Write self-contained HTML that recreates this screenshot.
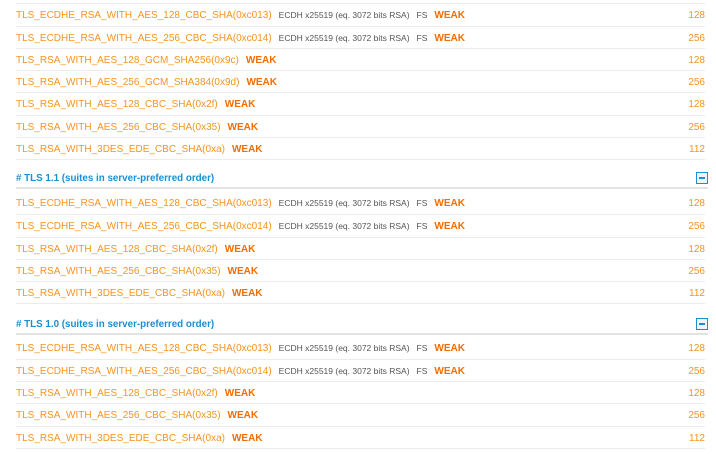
<!DOCTYPE html>
<html><head><meta charset="utf-8"><style>
body{margin:0;width:716px;height:454px;background:#fff;position:relative;overflow:hidden;font-family:"Liberation Sans",Arial,sans-serif}
.r{position:absolute;left:16px;width:689px;height:22px;border-top:1px solid #ececec;box-sizing:border-box;line-height:21px;font-size:10px;color:#f7931e;white-space:nowrap;padding-top:1px}
.r .n{position:absolute;right:0;top:1px;line-height:21px}
.s,.fs,.w{line-height:1}
.s{font-size:8.5px;color:#555;margin-left:7px}
.fs{font-size:8.5px;color:#555;margin-left:7px}
.w{font-weight:bold;color:#f56d00;margin-left:7px;font-size:10px}
.h{position:absolute;left:16px;width:692px;height:16px;border-bottom:2px solid #e3e3e3;font-size:9.8px;font-weight:bold;color:#1a8fd1;line-height:16px}
.m{position:absolute;right:0;top:1px;width:10px;height:10px;border:1px solid #1a8fd1;background:#eef6fb}
.m:after{content:"";position:absolute;left:2px;top:4px;width:6px;height:2px;background:#1a8fd1}
</style></head><body>
<div class="r" style="top:3px">TLS_ECDHE_RSA_WITH_AES_128_CBC_SHA(0xc013)<span class="s">ECDH x25519 (eq. 3072 bits RSA)</span><span class="fs">FS</span><span class="w">WEAK</span><span class="n">128</span></div>
<div class="r" style="top:25.5px">TLS_ECDHE_RSA_WITH_AES_256_CBC_SHA(0xc014)<span class="s">ECDH x25519 (eq. 3072 bits RSA)</span><span class="fs">FS</span><span class="w">WEAK</span><span class="n">256</span></div>
<div class="r" style="top:48px">TLS_RSA_WITH_AES_128_GCM_SHA256(0x9c)<span class="w">WEAK</span><span class="n">128</span></div>
<div class="r" style="top:70px">TLS_RSA_WITH_AES_256_GCM_SHA384(0x9d)<span class="w">WEAK</span><span class="n">256</span></div>
<div class="r" style="top:92px">TLS_RSA_WITH_AES_128_CBC_SHA(0x2f)<span class="w">WEAK</span><span class="n">128</span></div>
<div class="r" style="top:114.5px">TLS_RSA_WITH_AES_256_CBC_SHA(0x35)<span class="w">WEAK</span><span class="n">256</span></div>
<div class="r" style="top:137px;border-bottom:1px solid #ececec;height:23px">TLS_RSA_WITH_3DES_EDE_CBC_SHA(0xa)<span class="w">WEAK</span><span class="n">112</span></div>

<div class="h" style="top:171px"># TLS 1.1 (suites in server-preferred order)<span class="m"></span></div>
<div class="r" style="top:192px;border-top:none">TLS_ECDHE_RSA_WITH_AES_128_CBC_SHA(0xc013)<span class="s">ECDH x25519 (eq. 3072 bits RSA)</span><span class="fs">FS</span><span class="w">WEAK</span><span class="n">128</span></div>
<div class="r" style="top:214px">TLS_ECDHE_RSA_WITH_AES_256_CBC_SHA(0xc014)<span class="s">ECDH x25519 (eq. 3072 bits RSA)</span><span class="fs">FS</span><span class="w">WEAK</span><span class="n">256</span></div>
<div class="r" style="top:237px">TLS_RSA_WITH_AES_128_CBC_SHA(0x2f)<span class="w">WEAK</span><span class="n">128</span></div>
<div class="r" style="top:259px">TLS_RSA_WITH_AES_256_CBC_SHA(0x35)<span class="w">WEAK</span><span class="n">256</span></div>
<div class="r" style="top:281px;border-bottom:1px solid #ececec;height:23px">TLS_RSA_WITH_3DES_EDE_CBC_SHA(0xa)<span class="w">WEAK</span><span class="n">112</span></div>

<div class="h" style="top:317px"># TLS 1.0 (suites in server-preferred order)<span class="m"></span></div>
<div class="r" style="top:337px;border-top:none">TLS_ECDHE_RSA_WITH_AES_128_CBC_SHA(0xc013)<span class="s">ECDH x25519 (eq. 3072 bits RSA)</span><span class="fs">FS</span><span class="w">WEAK</span><span class="n">128</span></div>
<div class="r" style="top:359px">TLS_ECDHE_RSA_WITH_AES_256_CBC_SHA(0xc014)<span class="s">ECDH x25519 (eq. 3072 bits RSA)</span><span class="fs">FS</span><span class="w">WEAK</span><span class="n">256</span></div>
<div class="r" style="top:381px">TLS_RSA_WITH_AES_128_CBC_SHA(0x2f)<span class="w">WEAK</span><span class="n">128</span></div>
<div class="r" style="top:403px">TLS_RSA_WITH_AES_256_CBC_SHA(0x35)<span class="w">WEAK</span><span class="n">256</span></div>
<div class="r" style="top:426px;border-bottom:1px solid #ececec;height:23px">TLS_RSA_WITH_3DES_EDE_CBC_SHA(0xa)<span class="w">WEAK</span><span class="n">112</span></div>
</body></html>
